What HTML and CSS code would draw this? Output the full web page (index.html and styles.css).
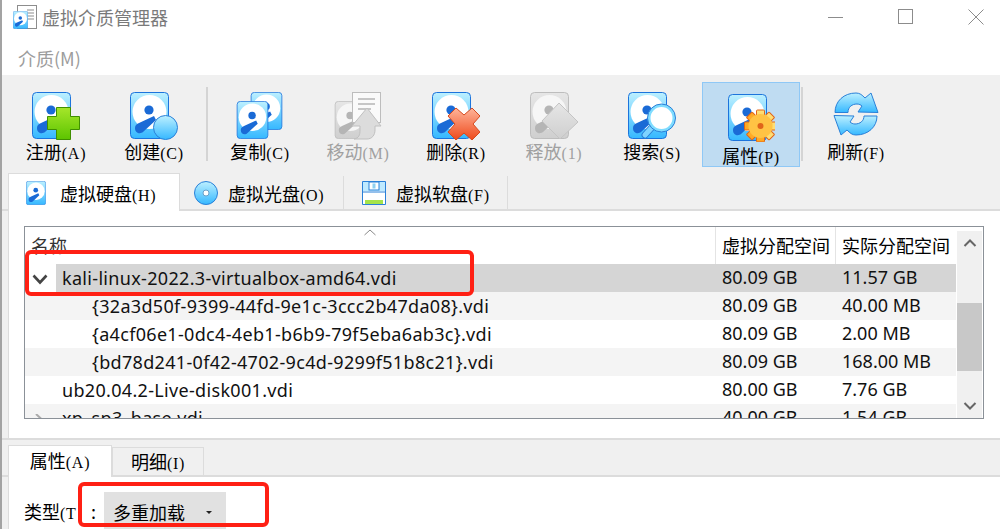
FILE: index.html
```html
<!DOCTYPE html>
<html lang="zh">
<head>
<meta charset="utf-8">
<title>虚拟介质管理器</title>
<link rel="stylesheet" href="styles.css">
</head>
<body>
<svg class="defs" width="0" height="0">
  <defs>
    <linearGradient id="blue" x1="0" y1="0" x2="0" y2="1"><stop offset="0" stop-color="#bdf0ff"/><stop offset="1" stop-color="#35b8ff"/></linearGradient>
    <linearGradient id="grey" x1="0" y1="0" x2="0" y2="1"><stop offset="0" stop-color="#e6e6e6"/><stop offset="1" stop-color="#cfcfcf"/></linearGradient>
    <linearGradient id="green" x1="0" y1="0" x2="0" y2="1"><stop offset="0" stop-color="#a6e62a"/><stop offset="1" stop-color="#5cc400"/></linearGradient>
    <linearGradient id="red" x1="0" y1="0" x2="0" y2="1"><stop offset="0" stop-color="#ffb59a"/><stop offset="1" stop-color="#ee4a1c"/></linearGradient>
    <linearGradient id="gold" x1="0" y1="0" x2="0" y2="1"><stop offset="0" stop-color="#ffe27a"/><stop offset="1" stop-color="#ffa51e"/></linearGradient>
    <symbol id="disk" viewBox="0 0 39 47">
      <rect x=".5" y=".5" width="38" height="46" rx="4" fill="url(#blue)" stroke="#1d74dc"/>
      <circle cx="19.500" cy="20" r="17" fill="#fff"/>
      <circle cx="19" cy="18" r="4.600" fill="#1a6ad6"/>
      <path d="M5 36 C5 33 7 32 9 31 L24 24 L26 28 L13 40 C11 42 5 42 5 36Z" fill="#1a6ad6"/>
    </symbol>
    <symbol id="disk-g" viewBox="0 0 39 47">
      <rect x=".5" y=".5" width="38" height="46" rx="4" fill="url(#grey)" stroke="#bdbdbd"/>
      <circle cx="19.500" cy="20" r="17" fill="#f6f6f6"/>
      <circle cx="19" cy="18" r="4.600" fill="#b5b5b5"/>
      <path d="M5 36 C5 33 7 32 9 31 L24 24 L26 28 L13 40 C11 42 5 42 5 36Z" fill="#b5b5b5"/>
    </symbol>
  </defs>
</svg>

<div class="window">
  <header class="titlebar">
    <svg class="app-icon" viewBox="0 0 24 24" width="24" height="24">
      <rect x="4.500" y=".5" width="19" height="23" fill="#fff" stroke="#8d8d8d"/>
      <path d="M14 5h7M14 8h7M14 11h7M14 14h7" stroke="#8d8d8d"/>
      <use href="#disk" x="0" y="6" width="15" height="18"/>
    </svg>
    <h1 class="title">虚拟介质管理器</h1>
    <div class="winctl">
      <svg width="16" height="16" viewBox="0 0 16 16"><path d="M0 8.500H15" stroke="#8c8c8c"/></svg>
      <svg width="16" height="16" viewBox="0 0 16 16"><rect x=".5" y=".5" width="14" height="14" fill="none" stroke="#8c8c8c"/></svg>
      <svg width="16" height="16" viewBox="0 0 16 16"><path d="M.5 .5L15.500 15.500M15.500 .5L.5 15.500" stroke="#8c8c8c"/></svg>
    </div>
  </header>
  <nav class="menubar">介质(M)</nav>

  <section class="toolbar">
    <div class="tool">
      <svg class="ico" viewBox="0 0 48 48"><use href="#disk" width="39" height="47"/>
        <polygon points="25,16 39,16 39,25 48,25 48,38 39,38 39,48 25,48 25,38 16,38 16,25 25,25" fill="url(#green)" stroke="#3f8f00" transform="translate(-.5 -.5)"/></svg>
      <span class="lbl">注册<i>(A)</i></span>
    </div>
    <div class="tool">
      <svg class="ico" viewBox="0 0 48 48"><use href="#disk" width="39" height="47"/>
        <circle cx="35.500" cy="35.500" r="12" fill="url(#blue)" stroke="#2a80d8"/></svg>
      <span class="lbl">创建<i>(C)</i></span>
    </div>
    <div class="sep"></div>
    <div class="tool">
      <svg class="ico" viewBox="0 0 48 48"><use href="#disk" x="14" width="33" height="38"/><use href="#disk" y="9" width="33" height="38"/></svg>
      <span class="lbl">复制<i>(C)</i></span>
    </div>
    <div class="tool off">
      <svg class="ico" viewBox="0 0 48 48"><use href="#disk-g" y="9" width="33" height="38"/>
        <rect x="18.500" y=".5" width="28" height="30" fill="#fafafa" stroke="#bdbdbd"/>
        <path d="M24 7h17M24 12h17M24 17h13" stroke="#b5b5b5" stroke-width="1.500"/>
        <path d="M33 16L47 34H41V38C41 43 38 47 33 47H20C25 46 26 43 26 38V34H18Z" fill="#dcdcdc" stroke="#c0c0c0"/></svg>
      <span class="lbl">移动<i>(M)</i></span>
    </div>
    <div class="tool">
      <svg class="ico" viewBox="0 0 48 48"><use href="#disk" width="39" height="47"/>
        <polygon points="24,16 32,23 40,16 48,24 41,32 48,40 40,48 32,41 24,48 16,40 23,32 16,24" fill="url(#red)" stroke="#d64a1e"/></svg>
      <span class="lbl">删除<i>(R)</i></span>
    </div>
    <div class="tool off">
      <svg class="ico" viewBox="0 0 48 48"><use href="#disk-g" width="39" height="47"/>
        <polygon points="29,11 48,30 30,47 12,29" fill="url(#grey)" stroke="#c4c4c4"/></svg>
      <span class="lbl">释放<i>(1)</i></span>
    </div>
    <div class="tool">
      <svg class="ico" viewBox="0 0 48 48"><use href="#disk" width="39" height="47"/>
        <path d="M26 33L17 43" stroke="#2a80d8" stroke-width="7" stroke-linecap="round"/>
        <path d="M26 33L17 43" stroke="#7fd4ff" stroke-width="5" stroke-linecap="round"/>
        <circle cx="33.500" cy="26" r="12.500" fill="#fff" stroke="#7fdcff" stroke-width="3"/>
        <circle cx="33.500" cy="26" r="14" fill="none" stroke="#2a80d8"/></svg>
      <span class="lbl">搜索<i>(S)</i></span>
    </div>
    <div class="tool on">
      <svg class="ico" viewBox="-1 0 48 48"><use href="#disk" width="39" height="47"/>
        <g fill="url(#gold)" stroke="#e0641a">
          <rect x="28.500" y="16" width="8" height="32" rx="1"/>
          <rect x="28.500" y="16" width="8" height="32" rx="1" transform="rotate(45 32.500 32)"/>
          <rect x="28.500" y="16" width="8" height="32" rx="1" transform="rotate(90 32.500 32)"/>
          <rect x="28.500" y="16" width="8" height="32" rx="1" transform="rotate(135 32.500 32)"/>
        </g>
        <circle cx="32.500" cy="32" r="12" fill="#ffc344"/>
        <circle cx="32.500" cy="32" r="3" fill="#e0641a"/></svg>
      <span class="lbl">属性<i>(P)</i></span>
    </div>
    <div class="sep sep2"></div>
    <div class="tool">
      <svg class="ico" viewBox="-2 0 48 48">
        <path d="M1 20.500H14C14 15 18 12 23 12C25 12 27 13 28 14L24 20L44 20.500L37 1L31 6C28 3 26 1 22 1C10 1 1 9 1 20.500Z" fill="url(#blue)" stroke="#2a80d8"/>
        <path d="M43 24H30C30 29 26 32 21 32C19 32 17 31 16 30L20 24L0 23.500L7 43L13 38C16 41 18 43 22 43C34 43 43 35 43 24Z" fill="url(#blue)" stroke="#2a80d8"/></svg>
      <span class="lbl">刷新<i>(F)</i></span>
    </div>
  </section>

  <div class="tabs">
    <div class="tab active">
      <svg class="tab-ico" viewBox="0 0 20 24"><use href="#disk" width="20" height="24"/></svg>
      <span>虚拟硬盘<i>(H)</i></span>
    </div>
    <div class="tab">
      <svg class="tab-ico" viewBox="0 0 24 24"><circle cx="12" cy="12" r="11.500" fill="url(#blue)" stroke="#2a80d8"/><circle cx="12" cy="12" r="3" fill="#fff" stroke="#6aa0c8"/></svg>
      <span>虚拟光盘<i>(O)</i></span>
    </div>
    <div class="tab tab-floppy">
      <svg class="tab-ico" viewBox="0 0 24 24"><path d="M.5 .5H23.500V23.500H.5Z" fill="#fff" stroke="#2a80d8"/><rect x="1" y="1" width="22" height="9" fill="#bfeaff"/><rect x="7" y="1" width="10" height="8" fill="#fff" stroke="#2a80d8"/><rect x="10.500" y="2.500" width="3" height="5" fill="#8fd0f0"/><rect x="3" y="19" width="18" height="4" fill="#a5e34a"/><path d="M1 11H23" stroke="#2a80d8"/></svg>
      <span>虚拟软盘<i>(F)</i></span>
    </div>
  </div>

  <main class="panel">
    <div class="table">
      <div class="grid">
        <div class="thead">
          <div class="th name">名称<svg class="sort" width="12" height="7" viewBox="0 0 12 7"><path d="M.5 6L6 1L11.500 6" fill="none" stroke="#8a8a8a"/></svg></div>
          <div class="th">虚拟分配空间</div>
          <div class="th">实际分配空间</div>
        </div>
        <div class="row sel">
          <div class="td name lv0"><svg class="arrow" width="16" height="11" viewBox="0 0 16 11"><path d="M1.500 1.500L8 8.500L14.500 1.500" fill="none" stroke="#444" stroke-width="2.600"/></svg><span class="selname">kali-linux-2022.3-virtualbox-amd64.vdi</span></div>
          <div class="td">80.09 GB</div><div class="td">11.57 GB</div>
        </div>
        <div class="row alt"><div class="td name lv1">{32a3d50f-9399-44fd-9e1c-3ccc2b47da08}.vdi</div><div class="td">80.09 GB</div><div class="td">40.00 MB</div></div>
        <div class="row"><div class="td name lv1">{a4cf06e1-0dc4-4eb1-b6b9-79f5eba6ab3c}.vdi</div><div class="td">80.09 GB</div><div class="td">2.00 MB</div></div>
        <div class="row alt"><div class="td name lv1">{bd78d241-0f42-4702-9c4d-9299f51b8c21}.vdi</div><div class="td">80.09 GB</div><div class="td">168.00 MB</div></div>
        <div class="row"><div class="td name lv0b">ub20.04.2-Live-disk001.vdi</div><div class="td">80.00 GB</div><div class="td">7.76 GB</div></div>
        <div class="row alt"><div class="td name lv0"><svg class="arrow" width="16" height="11" viewBox="0 0 16 11"><path d="M4 0L10 5.500L4 11" fill="none" stroke="#aaa" stroke-width="2"/></svg><span class="selname">xp_sp3_base.vdi</span></div><div class="td">40.00 GB</div><div class="td">1.54 GB</div></div>
      </div>
      <div class="scroll">
        <svg width="14" height="10" viewBox="0 0 14 10"><path d="M1.500 8L7 2.500L12.500 8" fill="none" stroke="#666" stroke-width="2"/></svg>
        <div class="thumb"></div>
        <svg width="14" height="10" viewBox="0 0 14 10"><path d="M1.500 2L7 7.500L12.500 2" fill="none" stroke="#666" stroke-width="2"/></svg>
      </div>
    </div>
  </main>

  <div class="subtabs">
    <div class="subtab active">属性<i>(A)</i></div>
    <div class="subtab">明细<i>(I)</i></div>
  </div>
  <div class="props">
    <span class="prop-label">类型<i>(T</i></span>
    <span class="colon">:</span>
    <div class="combo"><span>多重加载</span><b class="caret"></b></div>
  </div>
</div>

<div class="mark mark-a"></div>
<div class="mark mark-b"></div>
</body>
</html>
```

FILE: styles.css
```css
* { box-sizing: border-box; }
html, body { margin: 0; padding: 0; }
body {
  width: 1000px;
  height: 529px;
  overflow: hidden;
  position: relative;
  background: #f0f0f0;
  font-family: "Noto Sans CJK SC", "Noto Sans", sans-serif;
  color: #000;
}
i { font-style: normal; font-family: "Liberation Serif", serif; font-size: 16px; letter-spacing: .7px; }
.defs { position: absolute; }
.window { height: 529px; border-left: 2px solid #a3a3a3; display: flex; flex-direction: column; overflow: hidden; }

.titlebar { height: 37px; background: #fff; display: flex; align-items: center; padding-left: 11px; flex: none; }
.app-icon { flex: none; margin-top: -4px; }
.title { margin: -2px 0 0 5px; font-size: 18px; font-weight: 400; line-height: 37px; color: #7a7a7a; }
.winctl { margin-left: auto; display: flex; gap: 54px; padding-right: 16px; margin-top: -4px; }
.menubar { height: 38px; background: #fff; padding-left: 16px; font-size: 18px; line-height: 42px; color: #9c9c9c; flex: none; }

.toolbar { height: 98px; padding: 7px 0 0 5px; display: flex; align-items: flex-start; flex: none; }
.tool { width: 98px; height: 85px; padding-top: 10px; display: flex; flex-direction: column; align-items: center; }
.ico { width: 48px; height: 48px; flex: none; display: block; }
.lbl { font-size: 18px; line-height: 24px; margin-top: -1px; white-space: nowrap; }
.off .lbl { color: #a0a0a0; }
.on { background: #bfdcf2; border: 1px solid #8fc8f6; margin-left: 1px; padding-top: 11px; }
.on .lbl { margin-top: 1px; }
.sep { width: 2px; height: 74px; margin: 5px 3px 0; background: #d4d4d4; flex: none; }
.sep2 { margin: 5px 4px 0 1px; }

.tabs { height: 38px; display: flex; align-items: flex-end; padding-left: 6px; border-bottom: 2px solid #dcdcdc; flex: none; }
.tab { height: 33px; padding-left: 14px; display: flex; align-items: center; gap: 10px; font-size: 18px; width: 164px; border-right: 1px solid #dcdcdc; white-space: nowrap; }
.tab.active { width: 172px; height: 38px; margin-bottom: -2px; background: #fff; border: 1px solid #dcdcdc; border-bottom: 0; padding-left: 17px; gap: 14px; }
.tab.tab-floppy { padding-left: 18px; }
.tab-ico { width: 24px; height: 24px; flex: none; }
.tab.active .tab-ico { width: 20px; height: 24px; }

.panel { height: 227px; margin-left: 6px; background: #fff; border-left: 1px solid #dcdcdc; padding: 15px 0 0 15px; flex: none; }
.table { width: 960px; height: 193px; border: 1px solid #8b9198; display: flex; background: #fff; overflow: hidden; }
.grid { width: 931px; flex: none; }
.thead, .row { display: grid; grid-template-columns: 690px 120px 121px; }
.thead { height: 37px; }
.th { font-size: 18px; line-height: 37px; padding-left: 6px; border-left: 1px solid #e4e4e4; white-space: nowrap; position: relative; }
.th.name { border-left: 0; color: #333; }
.sort { position: absolute; left: 339px; top: 2px; }
.row { height: 28px; }
.td { font-family: "Noto Sans", sans-serif; font-size: 18px; line-height: 26px; padding-left: 7px; white-space: nowrap; overflow: hidden; color: #111; }
.td.name { padding-left: 0; display: flex; align-items: center; letter-spacing: .32px; }
.alt { background: #f4f4f4; }
.row.sel { background: linear-gradient(#d5d5d5, #d5d5d5) no-repeat 31px 0 / 900px 100%; }
.arrow { margin: 3px 0 0 7px; flex: none; }
.selname { margin-left: 14px; }
.td.lv1 { padding-left: 67px; }
.td.lv0b { padding-left: 37px; }
.scroll { flex: 1; margin: 4px 1px 0 1px; background: #f0f0f0; display: flex; flex-direction: column; align-items: center; }
.scroll svg { flex: none; margin-top: 7px; }
.thumb { width: 100%; height: 68px; background: #c8c8c8; margin-top: 55px; margin-bottom: 23px; flex: none; }

.subtabs { height: 39px; border-top: 2px solid #dcdcdc; border-bottom: 2px solid #dcdcdc; display: flex; align-items: flex-end; padding-left: 6px; flex: none; }
.subtab { width: 92px; height: 28px; background: #f0f0f0; border: 1px solid #dcdcdc; border-bottom: 0; font-size: 18px; line-height: 26px; text-align: center; white-space: nowrap; }
.subtab.active { width: 104px; height: 32px; margin-bottom: -2px; background: #fff; border-top: 1px solid #dcdcdc; line-height: 28px; }
.props { flex: none; height: 52px; margin-left: 6px; background: #fff; border-left: 1px solid #dcdcdc; padding: 15px 0 0 15px; display: flex; align-items: flex-start; font-size: 18px; }
.prop-label { line-height: 38px; width: 67px; white-space: nowrap; overflow: hidden; }
.colon { line-height: 38px; width: 13px; }
.combo { width: 122px; height: 40px; background: #e1e1e1; display: flex; align-items: center; padding-left: 9px; }
.caret { margin-left: 21px; width: 0; height: 0; border: 3px solid transparent; border-top-color: #222; border-bottom: 0; }

.mark { position: absolute; border: 4.500px solid #ff2014; border-radius: 6px; }
.mark-a { left: 25px; top: 250px; width: 449px; height: 46px; }
.mark-b { left: 78px; top: 482px; width: 191px; height: 45px; }
```
